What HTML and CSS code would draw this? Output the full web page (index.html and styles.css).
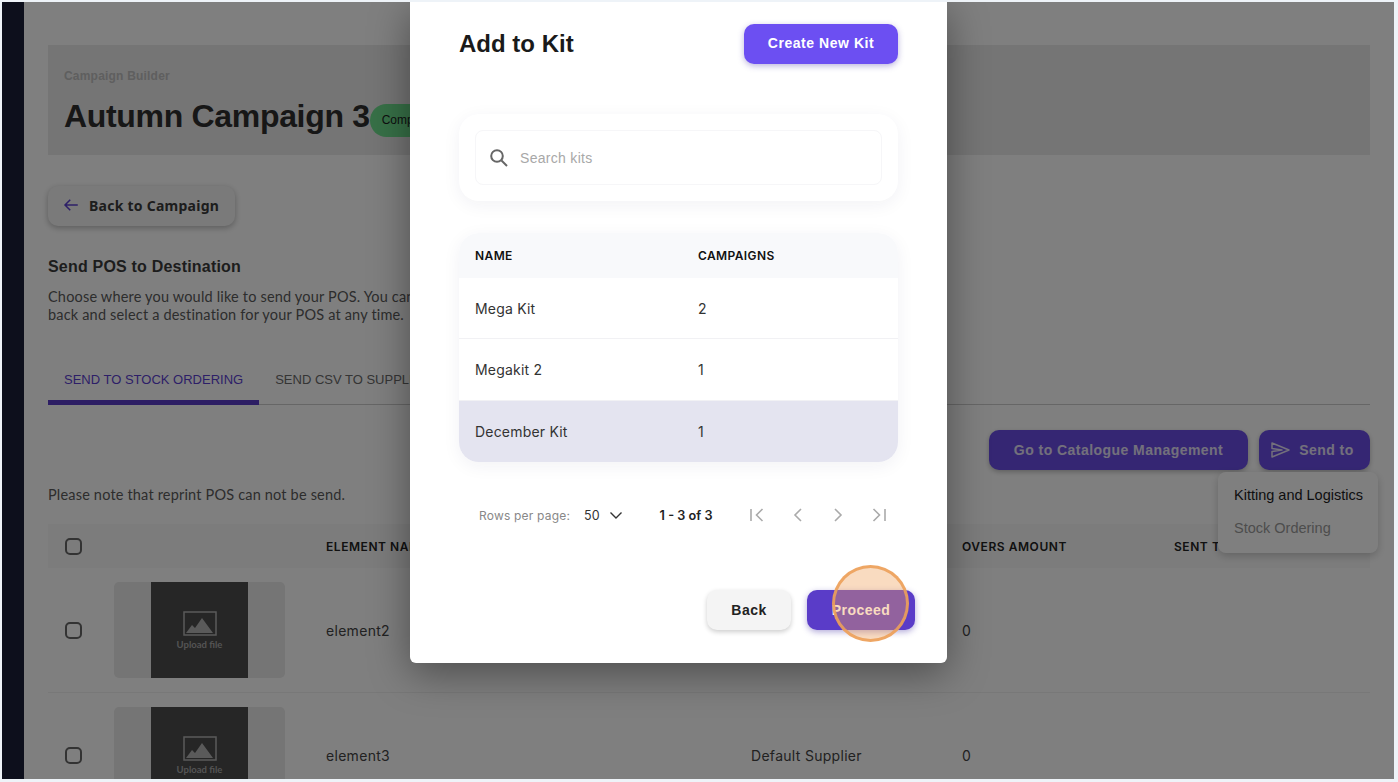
FILE: index.html
```html
<!DOCTYPE html>
<html lang="en">
<head>
  <meta charset="UTF-8" />
  <title>Add to Kit</title>
  <link rel="stylesheet" href="styles.css">
</head>
<body>
  <div class="app">
    <aside class="sidebar"></aside>

    <main class="main">
      <header class="page-head">
        <p class="crumb">Campaign Builder</p>
        <div class="title-row">
          <h1>Autumn Campaign 3</h1>
          <span class="pill">Completed</span>
        </div>
      </header>

      <button class="back-link">
        <svg width="18" height="18" viewBox="0 0 24 24" fill="none" stroke="#5b3fd0" stroke-width="2"><path d="M21 12H4M11 5l-7 7 7 7"/></svg>
        Back to Campaign
      </button>

      <h2 class="section-title">Send POS to Destination</h2>
      <p class="section-text">Choose where you would like to send your POS. You can come<br>back and select a destination for your POS at any time.</p>

      <div class="tabs">
        <span class="tab active">SEND TO STOCK ORDERING</span>
        <span class="tab">SEND CSV TO SUPPLIER</span>
      </div>

      <div class="actions">
        <button class="btn-primary">Go to Catalogue Management</button>
        <button class="btn-primary btn-send">
          <svg width="19" height="16" viewBox="0 0 19 16" fill="none" stroke="currentColor" stroke-width="1.5" stroke-linejoin="round"><path d="M1 1 18 8 1 15 1 9.5 11 8 1 6.5z"/></svg>
          Send to
        </button>
      </div>

      <p class="note">Please note that reprint POS can not be send.</p>

      <section class="pos-table">
        <div class="pos-row pos-head">
          <span class="check"></span>
          <span></span>
          <span>ELEMENT NAME</span>
          <span>SUPPLIER</span>
          <span>OVERS AMOUNT</span>
          <span>SENT TO</span>
        </div>
        <div class="pos-row">
          <span class="check"></span>
          <div class="thumb">
            <div class="thumb-inner">
              <svg width="34" height="25" viewBox="0 0 34 25"><rect x="1" y="1" width="32" height="23" fill="none" stroke="#b4b4b4" stroke-width="1.5"/><path d="M3 22l6-8 3 3 7-10 11 15z" fill="#b4b4b4"/></svg>
              <span>Upload file</span>
            </div>
          </div>
          <span>element2</span>
          <span></span>
          <span>0</span>
          <span></span>
        </div>
        <div class="pos-row">
          <span class="check"></span>
          <div class="thumb">
            <div class="thumb-inner">
              <svg width="34" height="25" viewBox="0 0 34 25"><rect x="1" y="1" width="32" height="23" fill="none" stroke="#b4b4b4" stroke-width="1.5"/><path d="M3 22l6-8 3 3 7-10 11 15z" fill="#b4b4b4"/></svg>
              <span>Upload file</span>
            </div>
          </div>
          <span>element3</span>
          <span>Default Supplier</span>
          <span>0</span>
          <span></span>
        </div>
      </section>

      <div class="send-menu">
        <span>Kitting and Logistics</span>
        <span class="muted">Stock Ordering</span>
      </div>
    </main>

    <div class="overlay"></div>

    <div class="dialog">
      <div class="dialog-head">
        <h2>Add to Kit</h2>
        <button class="btn-new">Create New Kit</button>
      </div>

      <div class="search-card">
        <div class="search-box">
          <svg width="24" height="24" viewBox="0 0 24 24" fill="none" stroke="#666" stroke-width="2"><circle cx="10" cy="10" r="5.8"/><path d="M14.5 14.5 20 20"/></svg>
          <span>Search kits</span>
        </div>
      </div>

      <div class="kit-table">
        <div class="kit-row kit-head"><span>NAME</span><span>CAMPAIGNS</span></div>
        <div class="kit-row"><span>Mega Kit</span><span>2</span></div>
        <div class="kit-row kit-row-tall"><span>Megakit 2</span><span>1</span></div>
        <div class="kit-row selected"><span>December Kit</span><span>1</span></div>
      </div>

      <div class="pager">
        <span class="pager-label">Rows per page:</span>
        <span class="pager-size">50</span>
        <svg class="pager-caret" width="12" height="7" viewBox="0 0 12 7" fill="none" stroke="#333" stroke-width="1.4"><path d="M.5.5 6 6 11.5.5"/></svg>
        <span class="pager-count">1 - 3 of 3</span>
        <div class="pager-nav">
          <svg width="14" height="14" viewBox="0 0 14 14" fill="none" stroke="#aaa" stroke-width="1.6"><path d="M1 1v12M12.5 1 6.5 7l6 6"/></svg>
          <svg width="14" height="14" viewBox="0 0 14 14" fill="none" stroke="#aaa" stroke-width="1.6"><path d="M10 1 4 7l6 6"/></svg>
          <svg width="14" height="14" viewBox="0 0 14 14" fill="none" stroke="#aaa" stroke-width="1.6"><path d="M4 1l6 6-6 6"/></svg>
          <svg width="14" height="14" viewBox="0 0 14 14" fill="none" stroke="#aaa" stroke-width="1.6"><path d="M1.5 1l6 6-6 6M13 1v12"/></svg>
        </div>
      </div>

      <div class="dialog-foot">
        <button class="btn-back">Back</button>
        <button class="btn-proceed">Proceed</button>
      </div>
    </div>

    <!-- click marker from the walkthrough -->
    <div class="click-mark"></div>
  </div>
</body>
</html>
```

FILE: styles.css
```css
:root {
  --purple: #6c4ff2;
  --purple-dark: #5a3cc8;
  --text: #1c1c1e;
  --frame: #eef3f8;
}
* { box-sizing: border-box; margin: 0; padding: 0; }
html, body { height: 100%; overflow: hidden; }
body {
  background: var(--frame);
  padding: 2px 4px 3px 2px;
  font-family: "Liberation Sans", Arial, sans-serif;
  color: var(--text);
}
button { font-family: inherit; border: none; }

.app {
  position: relative;
  display: flex;
  height: 100%;
  overflow: hidden;
}
.sidebar {
  flex: 0 0 22px;
  background: #1a1e38;
}
.main {
  position: relative;
  flex: 1;
  padding: 43px 24px 0;
  background: #fff;
}

/* page header */
.page-head {
  height: 110px;
  padding: 24px 16px 0;
  background: #eaeaea;
}
.crumb {
  font-size: 12px;
  font-weight: bold;
  color: #bebebe;
  letter-spacing: .2px;
}
.title-row {
  display: flex;
  align-items: center;
  margin-top: 12px;
}
.title-row h1 {
  font-size: 32px;
  line-height: 38px;
  letter-spacing: -.32px;
  white-space: nowrap;
  color: #2e2e2e;
}
.pill {
  margin-top: 9px;
  padding: 0 14px 0 12px;
  height: 33px;
  line-height: 33px;
  border-radius: 17px;
  background: #6ee08e;
  font-size: 12px;
}

.back-link {
  display: flex;
  align-items: center;
  gap: 9px;
  width: 187px;
  height: 40px;
  margin-top: 31px;
  padding: 0 0 2px 14px;
  border-radius: 10px;
  background: #f4f4f4;
  box-shadow: 0 2px 6px rgba(0,0,0,.28);
  font-family: "Noto Sans", sans-serif;
  font-size: 14px;
  font-weight: 700;
  letter-spacing: .25px;
  color: #3a3a3a;
}
.section-title {
  margin-top: 31px;
  font-size: 16px;
  line-height: 20px;
  letter-spacing: .2px;
  color: #3a3a3a;
}
.section-text {
  margin-top: 11px;
  width: 400px;
  height: 36px;
  font-family: Lato, sans-serif;
  font-size: 14.5px;
  line-height: 18px;
  letter-spacing: .18px;
  color: #5a5a5a;
  white-space: nowrap;
}

/* tabs */
.tabs {
  display: flex;
  height: 48px;
  margin-top: 33px;
  border-bottom: 1px solid #ccc;
}
.tab {
  padding: 15px 16px 0;
  font-size: 13px;
  line-height: 16px;
  color: #6a6a6a;
}
.tab.active {
  height: 48px;
  color: #5b3fd0;
  border-bottom: 5px solid #5a3cc8;
}

.actions {
  display: flex;
  justify-content: flex-end;
  gap: 11px;
  margin-top: 25px;
}
.btn-primary {
  display: flex;
  align-items: center;
  justify-content: center;
  gap: 9px;
  width: 259px;
  height: 40px;
  border-radius: 10px;
  background: #6a4de6;
  box-shadow: 0 2px 5px rgba(0,0,0,.25);
  color: #e6e0f8;
  font-size: 14px;
  font-weight: bold;
  letter-spacing: .45px;
}
.btn-send { width: 111px; padding-right: 4px; }

.note {
  margin-top: 16px;
  font-family: Lato, sans-serif;
  font-size: 14.5px;
  line-height: 18px;
  letter-spacing: .18px;
  color: #5a5a5a;
}

/* POS table */
.pos-table {
  margin-top: 20px;
  border-radius: 12px 12px 0 0;
  background: #fff;
}
.pos-row {
  display: grid;
  grid-template-columns: 66px 212px 425px 211px 212px 1fr;
  align-items: center;
  height: 125px;
  border-bottom: 1px solid #f0f0f0;
  font-family: Inter, sans-serif;
  font-size: 14px;
  letter-spacing: .3px;
  color: #444;
}
.pos-head {
  height: 44px;
  background: #f9f9f9;
  font-size: 12px;
  font-weight: 600;
  letter-spacing: .55px;
  color: #222;
  border-bottom: none;
}
.check {
  width: 17px;
  height: 17px;
  margin-left: 17px;
  border: 2px solid #666;
  border-radius: 5px;
}
.thumb {
  display: flex;
  justify-content: center;
  width: 171px;
  height: 96px;
  border-radius: 5px;
  background: #eaeaea;
}
.thumb-inner {
  display: flex;
  flex-direction: column;
  align-items: center;
  justify-content: center;
  gap: 3px;
  width: 97px;
  background: #4c4c4c;
  color: #a8a8a8;
  font-family: Lato, sans-serif;
  font-size: 9.5px;
  font-weight: 700;
  letter-spacing: 0;
}

.send-menu {
  position: absolute;
  top: 470px;
  left: 1194px;
  display: flex;
  flex-direction: column;
  gap: 15px;
  width: 160px;
  height: 81px;
  padding: 14px 0 0 16px;
  border-radius: 8px;
  background: #fff;
  box-shadow: 0 3px 8px rgba(0,0,0,.2);
  font-size: 14.5px;
  line-height: 18px;
  white-space: nowrap;
}
.send-menu .muted { color: #9a9a9a; }

.overlay {
  position: absolute;
  inset: 0;
  background: rgba(0,0,0,.5);
}

/* dialog */
.dialog {
  position: absolute;
  top: 0;
  left: 408px;
  width: 537px;
  height: 661px;
  padding: 22px 49px 0;
  border-radius: 0 0 6px 6px;
  background: #fff;
  box-shadow: 0 10px 40px rgba(0,0,0,.4);
}
.dialog-head {
  display: flex;
  align-items: center;
  justify-content: space-between;
  height: 40px;
}
.dialog-head h2 {
  font-size: 24px;
  color: #1a1a1a;
}
.btn-new {
  width: 154px;
  height: 40px;
  padding-bottom: 2px;
  border-radius: 10px;
  background: var(--purple);
  box-shadow: 0 2px 6px rgba(60,40,160,.35);
  color: #fff;
  font-size: 14px;
  font-weight: bold;
  letter-spacing: .55px;
}
.search-card {
  margin-top: 50px;
  padding: 16px;
  height: 87px;
  border-radius: 20px;
  background: #fff;
  box-shadow: 0 4px 18px rgba(30,40,80,.06);
}
.search-box {
  display: flex;
  align-items: center;
  gap: 9px;
  height: 55px;
  padding-left: 11px;
  border: 1px solid #f6f6f8;
  border-radius: 8px;
  font-size: 14px;
  letter-spacing: .3px;
  color: #a8a8a8;
}

.kit-table {
  margin-top: 32px;
  overflow: hidden;
  border-radius: 20px;
  box-shadow: 0 4px 18px rgba(30,40,80,.06);
  font-family: Inter, sans-serif;
  font-size: 14px;
  letter-spacing: .2px;
  color: #333;
}
.kit-row {
  display: grid;
  grid-template-columns: 223px 1fr;
  align-items: center;
  height: 61px;
  padding-left: 16px;
  border-bottom: 1px solid #f1f1f4;
}
.kit-row-tall { height: 62px; }
.kit-head {
  height: 45px;
  background: #f8f9fb;
  border-bottom: none;
  font-size: 12px;
  font-weight: 600;
  letter-spacing: .4px;
  color: #111;
}
.kit-row.selected {
  background: #e4e4f0;
  border-bottom: none;
}

.pager {
  display: flex;
  align-items: center;
  height: 24px;
  margin-top: 41px;
  padding-left: 20px;
  font-family: Inter, sans-serif;
  font-size: 12px;
}
.pager-label { color: #888; letter-spacing: .2px; }
.pager-size { margin-left: 14px; font-size: 12.5px; color: #333; }
.pager-caret { margin-left: 10px; }
.pager-count { margin-left: 38px; font-size: 12.7px; font-weight: 600; color: #222; }
.pager-nav {
  display: flex;
  gap: 26.5px;
  margin-left: 38px;
}

.dialog-foot {
  display: flex;
  justify-content: flex-end;
  gap: 16px;
  margin-top: 63px;
  margin-right: -17px;
}
.btn-back, .btn-proceed {
  height: 40px;
  border-radius: 10px;
  font-size: 14px;
  font-weight: bold;
  letter-spacing: .5px;
}
.btn-back {
  width: 84px;
  background: #f4f4f4;
  box-shadow: 0 2px 5px rgba(0,0,0,.2);
  color: #222;
}
.btn-proceed {
  width: 108px;
  background: var(--purple-dark);
  box-shadow: 0 2px 6px rgba(60,40,160,.4);
  color: #fff;
}
.click-mark {
  position: absolute;
  top: 563px;
  left: 830px;
  width: 77px;
  height: 77px;
  border-radius: 50%;
  border: 3px solid rgba(236,160,90,.9);
  background: rgba(240,160,90,.38);
}
```
